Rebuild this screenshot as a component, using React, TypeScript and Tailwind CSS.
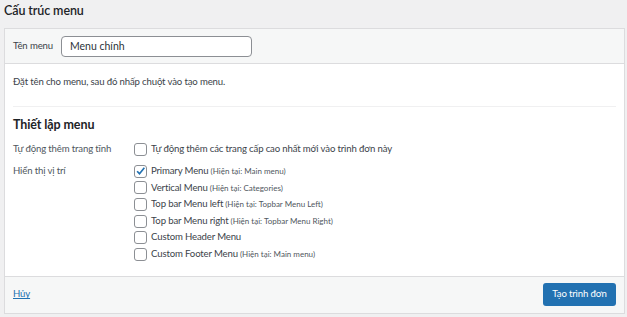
import { useState } from 'react';

const locations = [
  { name: 'Primary Menu', current: 'Main menu', checked: true },
  { name: 'Vertical Menu', current: 'Categories', checked: false },
  { name: 'Top bar Menu left', current: 'Topbar Menu Left', checked: false },
  { name: 'Top bar Menu right', current: 'Topbar Menu Right', checked: false },
  { name: 'Custom Header Menu', current: '', checked: false },
  { name: 'Custom Footer Menu', current: 'Main menu', checked: false },
];

function Box({ checked, onClick }: { checked: boolean; onClick: () => void }) {
  return (
    <button
      onClick={onClick}
      className="w-[13px] h-[13px] shrink-0 rounded-[3px] border border-[#8c8f94] bg-white flex items-center justify-center"
    >
      {checked && (
        <svg viewBox="0 0 12 12" className="w-[12px] h-[12px]">
          <path d="M2.3 6.3 L4.9 8.9 L10.2 2.4" fill="none" stroke="#2271b1" strokeWidth="1.8" />
        </svg>
      )}
    </button>
  );
}

export default function App() {
  const [name, setName] = useState('Menu chính');
  const [auto, setAuto] = useState(false);
  const [locs, setLocs] = useState(locations.map((l) => l.checked));

  return (
    <div className="w-[627px] h-[317px] bg-[#f0f0f1] text-[#3c434a] font-['Lato','Noto_Sans',sans-serif] overflow-hidden">
      <h2 className="px-[4px] pt-[2px] h-[28px] text-[12.5px] tracking-[-0.1px] font-semibold text-[#1d2327] leading-[17px]">Cấu trúc menu</h2>
      <div className="ml-[4px] w-[621px] border border-[#dcdcde] bg-white">
        <div className="h-[35px] bg-[#f6f7f7] border-b border-[#dcdcde] flex items-center px-[8px] gap-[8px]">
          <label className="text-[9.6px] tracking-[-0.15px] text-[#3c434a]">Tên menu</label>
          <input
            value={name}
            onChange={(e) => setName(e.target.value)}
            className="w-[191px] h-[21px] rounded-[4px] border border-[#8c8f94] bg-white px-[8px] text-[10.5px] text-[#2c3338] outline-none"
          />
        </div>
        <div className="px-[8px] text-[9.6px] tracking-[-0.15px]">
          <p className="pt-[11px] pb-[17px] leading-[14px]">Đặt tên cho menu, sau đó nhấp chuột vào tạo menu.</p>
          <div className="border-t border-[#f0f0f1]" />
          <h3 className="pt-[10px] text-[12.5px] tracking-[-0.1px] font-bold text-[#1d2327] leading-[16px]">Thiết lập menu</h3>
          <div className="flex mt-[8px] h-[17px] items-center">
            <div className="w-[121px] text-[#50575e]">Tự động thêm trang tĩnh</div>
            <div className="flex items-center gap-[4px]">
              <Box checked={auto} onClick={() => setAuto(!auto)} />
              <span>Tự động thêm các trang cấp cao nhất mới vào trình đơn này</span>
            </div>
          </div>
          <div className="flex mt-[5px] pb-[13px]">
            <div className="w-[121px] text-[#50575e] leading-[16.6px]">Hiển thị vị trí</div>
            <div className="flex flex-col">
              {locations.map((l, i) => (
                <div key={l.name} className="flex items-center gap-[4px] h-[16.6px]">
                  <Box
                    checked={locs[i]}
                    onClick={() => setLocs(locs.map((v, j) => (j === i ? !v : v)))}
                  />
                  <span className="whitespace-nowrap">
                    {l.name}
                    {l.current && (
                      <span className="text-[8px] tracking-normal text-[#50575e]"> (Hiện tại: {l.current})</span>
                    )}
                  </span>
                </div>
              ))}
            </div>
          </div>
        </div>
        <div className="h-[37px] bg-[#f6f7f7] border-t border-[#dcdcde] flex items-center justify-between px-[8px] text-[9.6px] tracking-[-0.15px]">
          <a href="#" className="text-[#2271b1] underline">Hủy</a>
          <button className="h-[23px] w-[73px] rounded-[3px] bg-[#2271b1] text-white">Tạo trình đơn</button>
        </div>
      </div>
    </div>
  );
}
